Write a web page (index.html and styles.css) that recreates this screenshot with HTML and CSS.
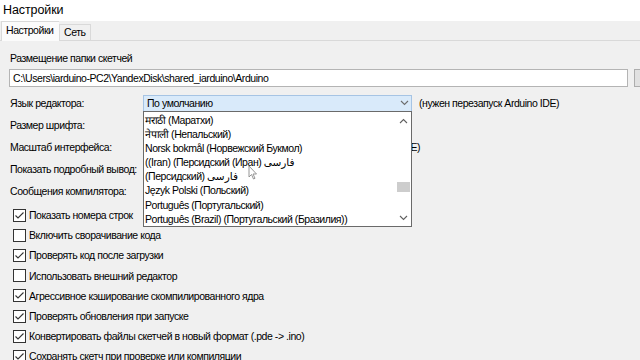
FILE: index.html
```html
<!DOCTYPE html>
<html lang="ru">

<head>
  <meta charset="utf-8">
  <link rel="stylesheet" href="styles.css">
</head>

<body>
  <div class="title-bar">Настройки</div>

  <div class="tabs">
    <div class="tab active">Настройки</div>
    <div class="tab">Сеть</div>
  </div>

  <div class="panel">
    <div class="section-label">Размещение папки скетчей</div>
    <div class="path-row">
      <div class="path-input">C:\Users\iarduino-PC2\YandexDisk\shared_iarduino\Arduino</div>
      <div class="browse-btn"></div>
    </div>

    <div class="setting">
      <div class="setting-label">Язык редактора:</div>
      <div class="combo">
        <span>По умолчанию</span>
        <svg class="chevron" width="9" height="6" viewBox="0 0 9 6"><path d="M1 1 L4.5 4.5 L8 1" fill="none" stroke="#6d6d6d" stroke-width="1.1"/></svg>

        <div class="dropdown">
          <div class="item">मराठी (Маратхи)</div>
          <div class="item">नेपाली (Непальский)</div>
          <div class="item">Norsk bokmål (Норвежский Букмол)</div>
          <div class="item">((Iran) (Персидский (Иран) فارسی</div>
          <div class="item">(Персидский) فارسی</div>
          <div class="item">Język Polski (Польский)</div>
          <div class="item">Português (Португальский)</div>
          <div class="item">Português (Brazil) (Португальский (Бразилия))</div>

          <div class="scrollbar">
            <svg class="arrow-up" width="9" height="6" viewBox="0 0 9 6"><path d="M1 5 L4.5 1.5 L8 5" fill="none" stroke="#606060" stroke-width="1.1"/></svg>
            <div class="thumb"></div>
            <svg class="arrow-down" width="9" height="6" viewBox="0 0 9 6"><path d="M1 1 L4.5 4.5 L8 1" fill="none" stroke="#606060" stroke-width="1.1"/></svg>
          </div>

          <svg class="cursor" width="10" height="15" viewBox="0 0 10 15"><path d="M1 1 L1 12 L3.5 9.5 L5.5 14 L7 13.3 L5 9 L8.5 9 Z" fill="#fff" stroke="#8a8a8a" stroke-width="0.9"/></svg>
        </div>
      </div>
      <span class="note">(нужен перезапуск Arduino IDE)</span>
    </div>

    <div class="setting">
      <div class="setting-label">Размер шрифта:</div>
      <div class="small-input"></div>
    </div>

    <div class="setting">
      <div class="setting-label">Масштаб интерфейса:</div>
      <span class="scale-note">(нужен перезапуск Arduino IDE)</span>
    </div>

    <div class="setting">
      <div class="setting-label">Показать подробный вывод:</div>
    </div>

    <div class="setting">
      <div class="setting-label">Сообщения компилятора:</div>
    </div>

    <div class="options">
      <div class="option"><span class="box checked"></span>Показать номера строк</div>
      <div class="option"><span class="box"></span>Включить сворачивание кода</div>
      <div class="option"><span class="box checked"></span>Проверять код после загрузки</div>
      <div class="option"><span class="box"></span>Использовать внешний редактор</div>
      <div class="option"><span class="box checked"></span>Агрессивное кэширование скомпилированного ядра</div>
      <div class="option"><span class="box checked"></span>Проверять обновления при запуске</div>
      <div class="option"><span class="box checked"></span>Конвертировать файлы скетчей в новый формат (.pde -&gt; .ino)</div>
      <div class="option"><span class="box checked"></span>Сохранять скетч при проверке или компиляции</div>
    </div>
  </div>
</body>

</html>
```

FILE: styles.css
```css
* {
  box-sizing: border-box;
}

body {
  margin: 0;
  width: 640px;
  height: 360px;
  overflow: hidden;
  background-color: #f0f0f0;
  font-family: 'Liberation Sans', 'DejaVu Sans', sans-serif;
  font-size: 10.5px;
  letter-spacing: -0.45px;
  color: #000;
}

.title-bar {
  height: 21px;
  background-color: #fff;
  padding-left: 3px;
  font-size: 12.5px;
  letter-spacing: -0.1px;
  line-height: 20px;
}

.tabs {
  display: flex;
  align-items: flex-end;
  height: 20px;
  padding-left: 1px;
  border-bottom: 1px solid #d9d9d9;
}

.tab {
  height: 16px;
  padding: 0 4px;
  border: 1px solid #d9d9d9;
  border-bottom: none;
  line-height: 14px;
  background-color: #f0f0f0;
}

.tab.active {
  width: 58px;
  height: 20px;
  margin-bottom: -1px;
  line-height: 17px;
  background-color: #fbfbfb;
  border-right: none;
}

.panel {
  padding: 10px 0 0 10px;
}

.section-label {
  line-height: 14px;
}

.path-row {
  display: flex;
  gap: 6px;
  margin: 4px 0 0 -1px;
}

.path-input {
  flex-shrink: 0;
  width: 619px;
  height: 18px;
  padding-left: 3px;
  line-height: 16px;
  background-color: #fff;
  border: 1px solid #b4b4b4;
}

.browse-btn {
  flex-shrink: 0;
  width: 80px;
  height: 18px;
  background-color: #e1e1e1;
  border: 1px solid #adadad;
}

.setting {
  display: flex;
  align-items: center;
  height: 22px;
  white-space: nowrap;
}

.path-row + .setting {
  margin-top: 5px;
}

.setting-label {
  width: 133px;
  flex-shrink: 0;
}

.combo {
  position: relative;
  display: flex;
  align-items: center;
  justify-content: space-between;
  width: 269px;
  height: 17px;
  padding: 0 2px 0 3px;
  background-color: #d9eafa;
  border: 1px solid #a6c4e4;
}

.note {
  margin-left: 7px;
}

.small-input {
  width: 40px;
  height: 17px;
  background-color: #fff;
  border: 1px solid #b4b4b4;
}

.scale-note {
  margin-left: 137px;
}

.dropdown {
  position: absolute;
  top: 15px;
  left: -1px;
  width: 269px;
  height: 116px;
  padding-top: 1px;
  background-color: #fff;
  border: 1px solid #6a6a6a;
  z-index: 10;
}

.dropdown .item {
  height: 14.2px;
  padding-left: 1px;
  line-height: 14px;
  white-space: nowrap;
}

.scrollbar {
  position: absolute;
  top: 0;
  right: 0;
  bottom: 0;
  width: 15px;
  background-color: #fff;
}

.scrollbar svg {
  position: absolute;
  left: 3px;
}

.arrow-up {
  top: 6px;
}

.arrow-down {
  bottom: 5px;
}

.thumb {
  position: absolute;
  top: 70px;
  left: 1px;
  right: 1px;
  height: 10px;
  background-color: #cdcdcd;
}

.cursor {
  position: absolute;
  top: 53px;
  left: 104px;
}

.options {
  margin-top: 3px;
  padding-left: 3px;
}

.option {
  display: flex;
  align-items: center;
  height: 20.2px;
  white-space: nowrap;
}

.box {
  width: 13px;
  height: 13px;
  margin-right: 3px;
  flex-shrink: 0;
  background-color: #fff;
  border: 1px solid #333;
}

.box.checked {
  background: #fff url("data:image/svg+xml;utf8,<svg xmlns='http://www.w3.org/2000/svg' width='11' height='11' viewBox='0 0 11 11'><path d='M1.5 5.5 L4 8 L9.5 2.5' fill='none' stroke='%23333' stroke-width='1.1'/></svg>") no-repeat center;
}
```
